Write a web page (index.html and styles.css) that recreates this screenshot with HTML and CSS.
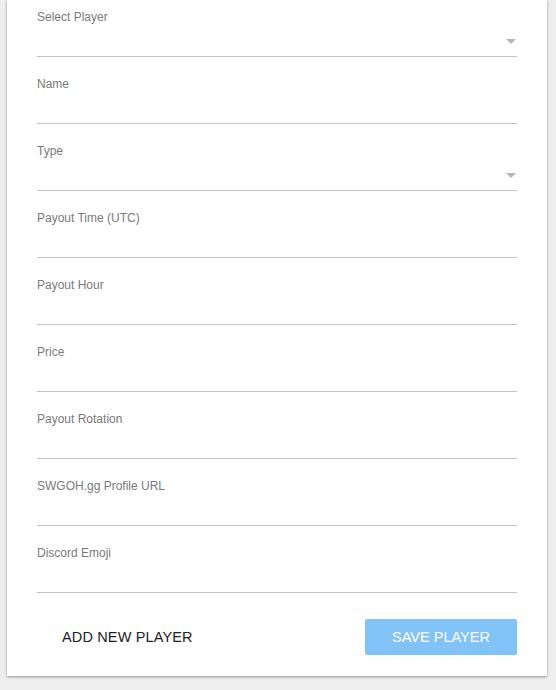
FILE: index.html
```html
<!DOCTYPE html>
<html>
<head>
<meta charset="utf-8">
<link rel="stylesheet" href="styles.css">
</head>
<body>
<div class="card">
  <div class="field"><div class="label">Select Player</div><div class="input select"><svg class="arrow" width="10" height="5" viewBox="0 0 10 5"><path d="M0 0H10L5 5Z" fill="#b5b5b5"/></svg></div></div>
  <div class="field"><div class="label">Name</div><div class="input"></div></div>
  <div class="field"><div class="label">Type</div><div class="input select"><svg class="arrow" width="10" height="5" viewBox="0 0 10 5"><path d="M0 0H10L5 5Z" fill="#b5b5b5"/></svg></div></div>
  <div class="field"><div class="label">Payout Time (UTC)</div><div class="input"></div></div>
  <div class="field"><div class="label">Payout Hour</div><div class="input"></div></div>
  <div class="field"><div class="label">Price</div><div class="input"></div></div>
  <div class="field"><div class="label">Payout Rotation</div><div class="input"></div></div>
  <div class="field"><div class="label">SWGOH.gg Profile URL</div><div class="input"></div></div>
  <div class="field"><div class="label">Discord Emoji</div><div class="input"></div></div>
  <div class="actions">
    <div class="btn flat">ADD NEW PLAYER</div>
    <div class="btn primary">SAVE PLAYER</div>
  </div>
</div>
</body>
</html>
```
FILE: styles.css
```css
html, body { margin: 0; padding: 0; }
body {
  background: #eeeeee;
  font-family: "Liberation Sans", Arial, sans-serif;
  width: 556px;
  height: 690px;
  overflow: hidden;
}
.card {
  margin-left: 7px;
  width: 540px;
  box-sizing: border-box;
  background: #fff;
  padding: 0 30px 21px 30px;
  box-shadow: 0 1px 3px rgba(0,0,0,0.25), 0 1px 2px rgba(0,0,0,0.15);
}
.field { padding-top: 10px; }
.field + .field { padding-top: 20px; }
.label {
  font-size: 12px;
  line-height: 14px;
  color: #7a7a7a;
}
.input {
  height: 32px;
  border-bottom: 1px solid #c2c2c2;
  display: flex;
  align-items: center;
  justify-content: flex-end;
}
.arrow { display: block; margin-right: 1px; margin-top: 3px; }
.actions {
  margin-top: 26px;
  display: flex;
  justify-content: space-between;
  align-items: center;
}
.btn {
  height: 36px;
  line-height: 36px;
  font-size: 14.5px;
  text-align: center;
  border-radius: 2px;
}
.flat { color: #222; padding: 0 25px; letter-spacing: 0.15px; }
.primary {
  width: 152px;
  background: #82c3f7;
  color: #fff;
}
```
